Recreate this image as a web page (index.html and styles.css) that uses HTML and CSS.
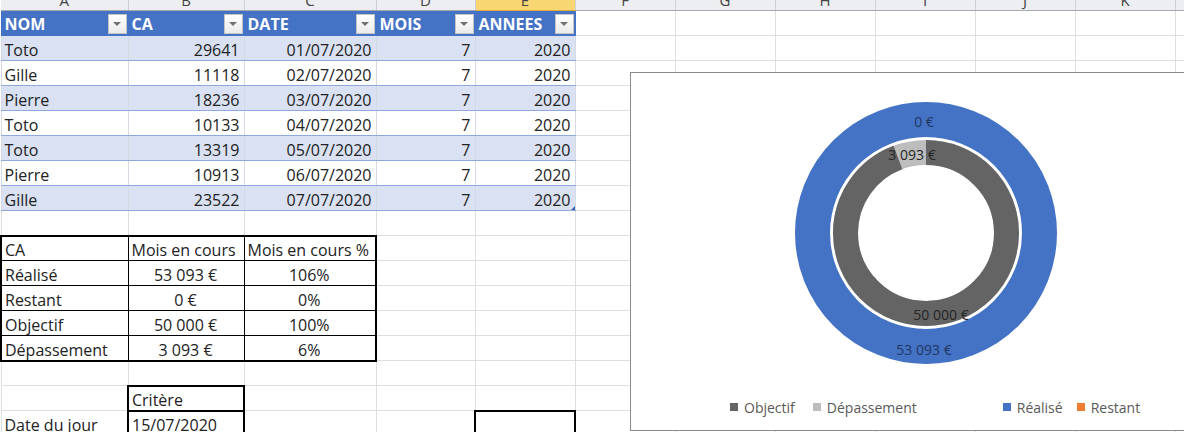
FILE: index.html
```html
<!DOCTYPE html>
<html>
	<head>
		<meta charset="UTF-8">
		<meta name="viewport" content="width=device-width, initial-scale=1.0">
		<title>Suivi CA</title>
		<link rel="stylesheet" href="styles.css">
	</head>
	<body>
		<div class="sheetWrap">
			<table class="sheet">
				<colgroup>
					<col class="colA">
					<col class="colB">
					<col class="colC">
					<col class="colD">
					<col class="colE">
					<col span="7" class="colStd">
				</colgroup>
				<thead>
					<tr class="letters">
						<th>A</th><th>B</th><th>C</th><th>D</th><th class="sel">E</th><th>F</th><th>G</th><th>H</th><th>I</th><th>J</th><th>K</th><th>L</th>
					</tr>
				</thead>
				<tbody>
					<tr class="tblHead">
						<td><div class="hd">NOM<span class="filter"></span></div></td>
						<td><div class="hd">CA<span class="filter"></span></div></td>
						<td><div class="hd">DATE<span class="filter"></span></div></td>
						<td><div class="hd">MOIS<span class="filter"></span></div></td>
						<td><div class="hd">ANNEES<span class="filter"></span></div></td>
						<td></td><td></td><td></td><td></td><td></td><td></td><td></td>
					</tr>
					<tr class="tbl band">
						<td>Toto</td><td>29641</td><td>01/07/2020</td><td>7</td><td>2020</td>
						<td></td><td></td><td></td><td></td><td></td><td></td><td></td>
					</tr>
					<tr class="tbl">
						<td>Gille</td><td>11118</td><td>02/07/2020</td><td>7</td><td>2020</td>
						<td></td><td></td><td></td><td></td><td></td><td></td><td></td>
					</tr>
					<tr class="tbl band">
						<td>Pierre</td><td>18236</td><td>03/07/2020</td><td>7</td><td>2020</td>
						<td></td><td></td><td></td><td></td><td></td><td></td><td></td>
					</tr>
					<tr class="tbl">
						<td>Toto</td><td>10133</td><td>04/07/2020</td><td>7</td><td>2020</td>
						<td></td><td></td><td></td><td></td><td></td><td></td><td></td>
					</tr>
					<tr class="tbl band">
						<td>Toto</td><td>13319</td><td>05/07/2020</td><td>7</td><td>2020</td>
						<td></td><td></td><td></td><td></td><td></td><td></td><td></td>
					</tr>
					<tr class="tbl">
						<td>Pierre</td><td>10913</td><td>06/07/2020</td><td>7</td><td>2020</td>
						<td></td><td></td><td></td><td></td><td></td><td></td><td></td>
					</tr>
					<tr class="tbl band">
						<td>Gille</td><td>23522</td><td>07/07/2020</td><td>7</td><td class="last">2020</td>
						<td></td><td></td><td></td><td></td><td></td><td></td><td></td>
					</tr>
					<tr>
						<td></td><td></td><td></td><td></td><td></td><td></td><td></td><td></td><td></td><td></td><td></td><td></td>
					</tr>
					<tr class="sum sumTop">
						<td>CA</td><td>Mois en cours</td><td>Mois en cours %</td>
						<td></td><td></td><td></td><td></td><td></td><td></td><td></td><td></td><td></td>
					</tr>
					<tr class="sum">
						<td>Réalisé</td><td class="ctr">53 093 €</td><td class="ctr">106%</td>
						<td></td><td></td><td></td><td></td><td></td><td></td><td></td><td></td><td></td>
					</tr>
					<tr class="sum">
						<td>Restant</td><td class="ctr">0 €</td><td class="ctr">0%</td>
						<td></td><td></td><td></td><td></td><td></td><td></td><td></td><td></td><td></td>
					</tr>
					<tr class="sum">
						<td>Objectif</td><td class="ctr">50 000 €</td><td class="ctr">100%</td>
						<td></td><td></td><td></td><td></td><td></td><td></td><td></td><td></td><td></td>
					</tr>
					<tr class="sum sumBot">
						<td>Dépassement</td><td class="ctr">3 093 €</td><td class="ctr">6%</td>
						<td></td><td></td><td></td><td></td><td></td><td></td><td></td><td></td><td></td>
					</tr>
					<tr>
						<td></td><td></td><td></td><td></td><td></td><td></td><td></td><td></td><td></td><td></td><td></td><td></td>
					</tr>
					<tr>
						<td></td><td class="frame">Critère</td><td></td><td></td><td></td>
						<td></td><td></td><td></td><td></td><td></td><td></td><td></td>
					</tr>
					<tr>
						<td>Date du jour</td><td class="frame">15/07/2020</td><td></td><td></td><td class="frame"></td>
						<td></td><td></td><td></td><td></td><td></td><td></td><td></td>
					</tr>
				</tbody>
			</table>
		</div>

		<div class="chart">
			<svg class="donut" width="598" height="318" viewBox="0 0 598 318">
				<!-- outer ring : Réalisé / Restant -->
				<circle cx="295" cy="160" r="113.5" fill="none" stroke="#4472c4" stroke-width="35"/>
				<!-- inner ring : Objectif / Dépassement -->
				<circle cx="295" cy="160" r="80.5" fill="none" stroke="#bdbdbd" stroke-width="25"/>
				<circle cx="295" cy="160" r="80.5" fill="none" stroke="#646464" stroke-width="25" stroke-dasharray="476.3 600" transform="rotate(-90 295 160)"/>

				<text class="lbl blue" x="293" y="54">0 €</text>
				<text class="lbl" x="281" y="87">3 093 €</text>
				<text class="lbl" x="310" y="247">50 000 €</text>
				<text class="lbl blue" x="293" y="282">53 093 €</text>
			</svg>
			<div class="legend">
				<div class="legGroup">
					<span class="legItem"><i class="sw objectif"></i>Objectif</span>
					<span class="legItem"><i class="sw depasse"></i>Dépassement</span>
				</div>
				<div class="legGroup second">
					<span class="legItem"><i class="sw realise"></i>Réalisé</span>
					<span class="legItem"><i class="sw restant"></i>Restant</span>
				</div>
			</div>
		</div>
	</body>
</html>
```

FILE: styles.css
```css
html, body {
	margin: 0;
	padding: 0;
	overflow: hidden;
	background-color: #fff;
}

body {
	position: relative;
	width: 1184px;
	height: 432px;
	font-family: "Open Sans", "Liberation Sans", sans-serif;
	color: #222;
}

.sheetWrap {
	margin-top: -11px;
}

.sheet {
	border-collapse: collapse;
	table-layout: fixed;
	width: 1274px;
	font-size: 16px;
}

.colA { width: 127px; }
.colB { width: 116px; }
.colC { width: 132px; }
.colD { width: 99px; }
.colE { width: 100px; }
.colStd { width: 100px; }

/* column letters */
.letters th {
	height: 21px;
	padding: 0;
	font-weight: normal;
	font-size: 15px;
	color: #444;
	background-color: #eceef1;
	border-right: 1px solid #cdd0d4;
	border-bottom: 1px solid #a5a9ae;
}

.letters th.sel {
	background-color: #f8d772;
	border-bottom-color: #e0a93c;
}

/* cells */
.sheet tbody tr {
	height: 25px;
}

.sheet td {
	padding: 0 4px 0 3px;
	line-height: 20px;
	vertical-align: bottom;
	white-space: nowrap;
	overflow: hidden;
	border: 1px solid #dcdee0;
}

/* excel table */
.tblHead td:nth-child(-n+5) {
	background-color: #4472c4;
	color: #fff;
	font-weight: bold;
	border-color: #4472c4;
	padding-right: 1px;
	vertical-align: middle;
}

.hd {
	display: flex;
	justify-content: space-between;
	align-items: center;
	line-height: 20px;
	padding-top: 1px;
}

.filter {
	flex: 0 0 17px;
	height: 18px;
	border: 1px solid #c4c4c4;
	background: linear-gradient(#ffffff, #ebebeb);
	display: flex;
	justify-content: center;
	align-items: center;
}

.filter::after {
	content: "";
	width: 0;
	height: 0;
	border-left: 4px solid transparent;
	border-right: 4px solid transparent;
	border-top: 4px solid #707070;
}

.tbl td:nth-child(-n+5) {
	border-top-color: #8ea9db;
	border-bottom-color: #8ea9db;
	border-left-color: #d4d9e3;
	border-right-color: #d4d9e3;
}

.tbl td:nth-child(n+2):nth-child(-n+5) {
	text-align: right;
}

.band td:nth-child(-n+5) {
	background-color: #d9e1f2;
}

.tbl td.last {
	position: relative;
}

.tbl td.last::after {
	content: "";
	position: absolute;
	right: 0;
	bottom: 0;
	border-left: 4px solid transparent;
	border-bottom: 4px solid #3a62b0;
}

/* summary block */
.sum td:nth-child(-n+3) {
	border-color: #000;
}

.sum td:nth-child(1) {
	border-left: 2px solid #000;
}

.sum td:nth-child(3) {
	border-right: 2px solid #000;
}

.sumTop td:nth-child(-n+3) {
	border-top: 2px solid #000;
}

.sumBot td:nth-child(-n+3) {
	border-bottom: 2px solid #000;
}

.sum td.ctr {
	text-align: center;
}

.sheet td.frame {
	border: 2px solid #000;
}

/* chart */
.chart {
	position: absolute;
	left: 630px;
	top: 72px;
	width: 600px;
	height: 359px;
	box-sizing: border-box;
	border: 1px solid #8a8a8a;
	background-color: #fff;
}

.donut {
	display: block;
}

.lbl {
	font-family: "Open Sans", "Liberation Sans", sans-serif;
	font-size: 14px;
	fill: #262626;
	text-anchor: middle;
}

.lbl.blue {
	fill: #1f3864;
}

.legend {
	height: 32px;
	display: flex;
	align-items: center;
	padding-left: 99px;
	font-size: 14px;
	color: #595959;
}

.legGroup {
	display: flex;
	align-items: center;
	gap: 18px;
}

.legGroup.second {
	margin-left: 86px;
	gap: 14px;
}

.legItem {
	display: flex;
	align-items: center;
}

.sw {
	width: 8px;
	height: 8px;
	margin-right: 6px;
}

.sw.objectif { background-color: #646464; }
.sw.depasse { background-color: #bdbdbd; }
.sw.realise { background-color: #4472c4; }
.sw.restant { background-color: #ed7d31; }
```
